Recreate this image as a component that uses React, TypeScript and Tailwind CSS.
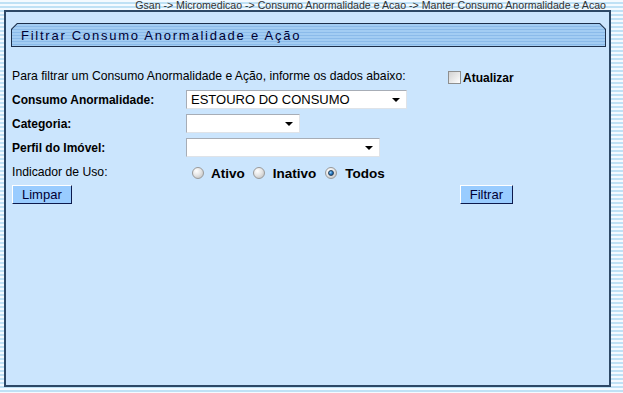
import React from "react";

const font = "font-['Liberation_Sans',Arial,sans-serif]";

function Select({ width, value }: { width: string; value?: string }) {
  return (
    <div
      className={`${width} h-[19px] bg-white border border-t-[#a7adb6] border-l-[#a7adb6] border-r-[#dfe3e8] border-b-[#dfe3e8] flex items-center pl-[4px] pr-[6px]`}
    >
      <span className="flex-1 text-[13px] leading-[15px] text-black whitespace-nowrap">
        {value}
      </span>
      <span className="w-0 h-0 border-l-[4px] border-r-[4px] border-t-[4px] border-l-transparent border-r-transparent border-t-black" />
    </div>
  );
}

function Radio({ checked }: { checked?: boolean }) {
  return (
    <span className="w-[12px] h-[12px] rounded-full border border-[#9a9a9a] bg-[radial-gradient(circle_at_35%_30%,#ffffff_0%,#e6e6e6_45%,#b9b9b9_100%)] flex items-center justify-center">
      {checked && (
        <span className="w-[6px] h-[6px] rounded-full bg-[radial-gradient(circle_at_35%_35%,#8fd0ff_0%,#1f6fb8_55%,#0b3f73_100%)] border border-[#24405c]" />
      )}
    </span>
  );
}

function Button({ label }: { label: string }) {
  return (
    <button className="h-[19px] px-[9px] bg-[#99ccff] border border-t-white border-l-white border-r-[#0d1a4d] border-b-[#0d1a4d] text-[13px] leading-[15px] text-[#000033]">
      {label}
    </button>
  );
}

export default function App() {
  return (
    <div
      className={`${font} w-[623px] h-[393px] overflow-hidden bg-[repeating-linear-gradient(180deg,#f4faff_0px,#f4faff_2px,#bfe1f5_2px,#bfe1f5_4px)]`}
    >
      <div className="h-[10px] flex justify-end pr-[17px]">
        <span className="text-[10.6px] leading-[10px] text-[#333333] whitespace-nowrap">
          Gsan -&gt; Micromedicao -&gt; Consumo Anormalidade e Acao -&gt; Manter Consumo Anormalidade e Acao
        </span>
      </div>

      <div className="ml-[4px] w-[607px] h-[377px] border-2 border-[#2c4866] bg-[#cbe5fd] flex flex-col">
        <div className="ml-[5px] mr-[3px] mt-[11px] h-[24px] bg-[#1c2f4a] p-px [clip-path:polygon(6px_0,calc(100%_-_6px)_0,100%_6px,100%_100%,0_100%,0_6px)]">
          <div className="h-full bg-[repeating-linear-gradient(180deg,#a3cdf3_0px,#a3cdf3_2px,#8bbbea_2px,#8bbbea_3px)] flex items-center pl-[9px] [clip-path:polygon(5.5px_0,calc(100%_-_5.5px)_0,100%_5.5px,100%_100%,0_100%,0_5.5px)]">
            <span className="text-[13px] leading-[15px] tracking-[1.75px] text-[#000033]">
              Filtrar Consumo Anormalidade e Ação
            </span>
          </div>
        </div>

        <div className="pl-[6px] flex flex-col text-black">
          <div className="mt-[22px] h-[14px] flex items-center">
            <span className="w-[436px] text-[12.2px] leading-[14px] whitespace-nowrap">
              Para filtrar um Consumo Anormalidade e Ação, informe os dados abaixo:
            </span>
            <span className="w-[13px] h-[13px] mt-[2px] border border-[#8e8f8f] bg-[linear-gradient(135deg,#d2d2d2_0%,#ececec_60%,#ffffff_100%)]" />
            <span className="ml-[2px] mt-[3px] text-[12px] leading-[14px] font-bold">Atualizar</span>
          </div>

          <div className="mt-[7px] h-[19px] flex items-center">
            <span className="w-[174px] text-[12px] leading-[14px] font-bold">Consumo Anormalidade:</span>
            <Select width="w-[221px]" value="ESTOURO DO CONSUMO" />
          </div>

          <div className="mt-[5px] h-[19px] flex items-center">
            <span className="w-[174px] text-[12px] leading-[14px] font-bold">Categoria:</span>
            <Select width="w-[114px]" />
          </div>

          <div className="mt-[5px] h-[19px] flex items-center">
            <span className="w-[174px] text-[12px] leading-[14px] font-bold">Perfil do Imóvel:</span>
            <Select width="w-[194px]" />
          </div>

          <div className="mt-[7px] h-[18px] flex items-center">
            <span className="w-[174px] text-[12.2px] leading-[14px] -mt-[2px]">Indicador de Uso:</span>
            <div className="ml-[6px] flex items-center text-[13.5px] leading-[15px] font-bold">
              <Radio />
              <span className="ml-[7px]">Ativo</span>
              <span className="ml-[8px]" />
              <Radio />
              <span className="ml-[8px]">Inativo</span>
              <span className="ml-[9px]" />
              <Radio checked />
              <span className="ml-[8px]">Todos</span>
            </div>
          </div>

          <div className="mt-[3px] w-[501px] flex justify-between">
            <Button label="Limpar" />
            <Button label="Filtrar" />
          </div>
        </div>
      </div>
    </div>
  );
}
